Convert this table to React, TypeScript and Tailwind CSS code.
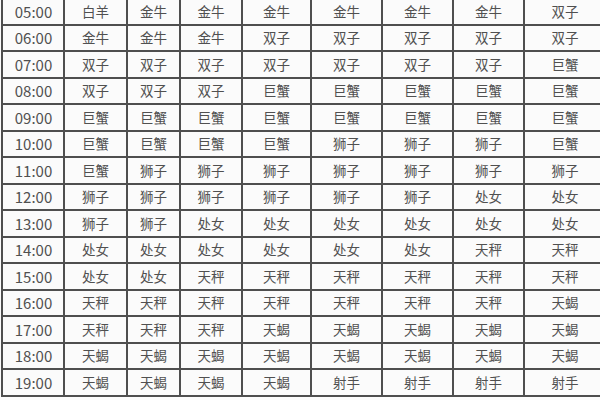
import React from 'react';

// 上升星座对照表（出生时间 × 地区）
const rows: [string, string[]][] = [
  ['05:00', ['白羊', '金牛', '金牛', '金牛', '金牛', '金牛', '金牛', '双子']],
  ['06:00', ['金牛', '金牛', '金牛', '双子', '双子', '双子', '双子', '双子']],
  ['07:00', ['双子', '双子', '双子', '双子', '双子', '双子', '双子', '巨蟹']],
  ['08:00', ['双子', '双子', '双子', '巨蟹', '巨蟹', '巨蟹', '巨蟹', '巨蟹']],
  ['09:00', ['巨蟹', '巨蟹', '巨蟹', '巨蟹', '巨蟹', '巨蟹', '巨蟹', '巨蟹']],
  ['10:00', ['巨蟹', '巨蟹', '巨蟹', '巨蟹', '狮子', '狮子', '狮子', '巨蟹']],
  ['11:00', ['巨蟹', '狮子', '狮子', '狮子', '狮子', '狮子', '狮子', '狮子']],
  ['12:00', ['狮子', '狮子', '狮子', '狮子', '狮子', '狮子', '处女', '处女']],
  ['13:00', ['狮子', '狮子', '处女', '处女', '处女', '处女', '处女', '处女']],
  ['14:00', ['处女', '处女', '处女', '处女', '处女', '处女', '天秤', '天秤']],
  ['15:00', ['处女', '处女', '天秤', '天秤', '天秤', '天秤', '天秤', '天秤']],
  ['16:00', ['天秤', '天秤', '天秤', '天秤', '天秤', '天秤', '天秤', '天蝎']],
  ['17:00', ['天秤', '天秤', '天秤', '天蝎', '天蝎', '天蝎', '天蝎', '天蝎']],
  ['18:00', ['天蝎', '天蝎', '天蝎', '天蝎', '天蝎', '天蝎', '天蝎', '天蝎']],
  ['19:00', ['天蝎', '天蝎', '天蝎', '天蝎', '射手', '射手', '射手', '射手']],
];

const cell =
  'flex items-center justify-center border-r-2 border-b-2 border-[#4f4f4f] text-[#505050] leading-none';

export default function App() {
  return (
    <div className="w-[600px] h-[400px] overflow-hidden bg-[#fbfbfb] font-['Noto_Sans_CJK_SC',sans-serif]">
      <div className="ml-px -mt-px w-[640px] grid grid-cols-[62px_63px_53px_62px_69px_71px_71px_71px_82px] auto-rows-[26.5px] border-l-2 border-[#4f4f4f]">
        {rows.map(([time, signs]) => (
          <React.Fragment key={time}>
            <div className={`${cell} text-[15px] pl-px`}>{time}</div>
            {signs.map((s, i) => (
              <div key={i} className={`${cell} text-[13.5px]`}>
                {s}
              </div>
            ))}
          </React.Fragment>
        ))}
      </div>
    </div>
  );
}
